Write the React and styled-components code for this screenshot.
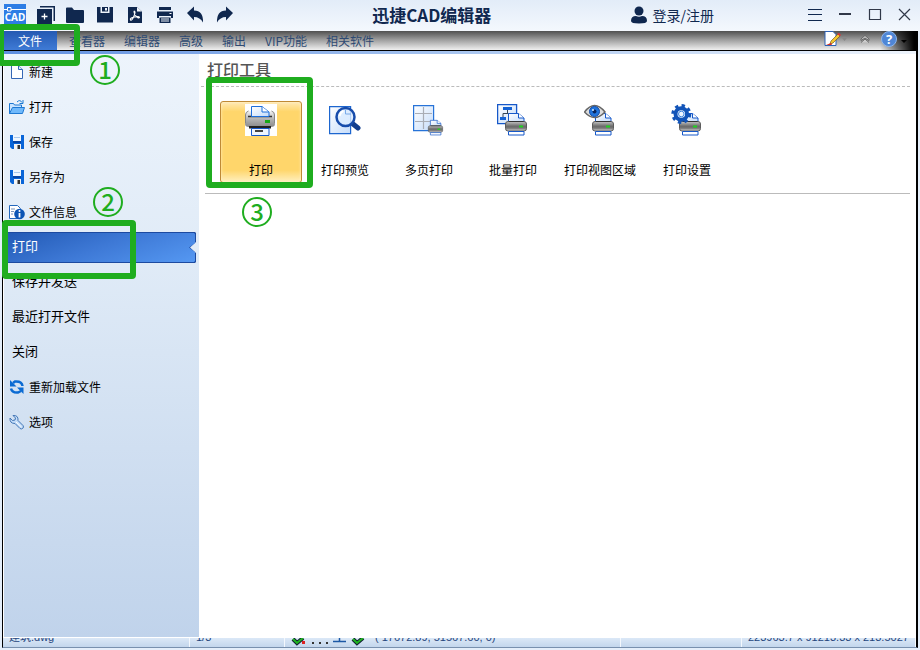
import { useState } from 'react'
import styled, { createGlobalStyle, css } from 'styled-components'

const NAVY = '#10284f'
const MARK = '#1fad1f'

const tabs = ['查看器', '编辑器', '高级', '输出', 'VIP功能', '相关软件']

const Svg = ({ size = 20, children }) => (
    <svg width={size} height={size} viewBox={`0 0 ${size} ${size}`} aria-hidden='true'>{children}</svg>
)

// title bar icons

const quickActions = [
    {
        name: '新建',
        icon: <><path d='M5 1h15v15h-1.5V2.500H5z' fill={NAVY} /><path d='M2 4h15v15H2z' fill={NAVY} /><path d='M9.500 8.500v6M6.500 11.500h6' stroke='#fff' strokeWidth='1.300' /></>
    },
    {
        name: '打开',
        icon: <path d='M1 3.500q0-1 1-1h5l2 2.500h9q1 0 1 1V17q0 1-1 1H2q-1 0-1-1z' fill={NAVY} />
    },
    {
        name: '保存',
        icon: <><path d='M2 2h16v15.500H2z' fill={NAVY} /><path d='M5.500 2h9v6h-9z' fill='#edf3fb' /><path d='M7 2h6v4.500H7z' fill={NAVY} /><path d='M10 3h2v2.500h-2z' fill='#edf3fb' /></>
    },
    {
        name: 'PDF',
        icon: <><path d='M3 2h9l5 4.500V18H3z' fill={NAVY} /><path d='M12 2l5 4.500h-5z' fill='#f3f7fc' /><path d='M9 6q2 0 0 5T5.500 15q-1-2 4-3t5 .5q-1 1.500-3.500-1.500T9 6' fill='none' stroke='#fff' strokeWidth='1.100' /></>
    },
    {
        name: '打印',
        icon: <><path d='M4 2h12v3H4zM2 6.500h16V13h-2v-2H4v2H2zM4.500 12.500h11V18h-11z' fill={NAVY} /><path d='M6 14h8M6 16h8' stroke='#edf3fb' /><path d='M14.500 8.500h2' stroke='#fff' /></>
    },
    {
        name: '撤销',
        icon: <path d='M2 8 9 1.500v4q9.500 0 9 12-3-5.500-9-5.500v3.500z' fill={NAVY} />
    },
    {
        name: '重做',
        icon: <path d='M18 8 11 1.500v4Q1.500 5.500 2 17.500q3-5.500 9-5.500v3.500z' fill={NAVY} />
    },
]

const windowActions = [
    { name: '菜单', icon: <path d='M3 4.500h14M3 9.500h14M3 15.500h14' stroke={NAVY} strokeWidth='1.200' /> },
    { name: '最小化', icon: <path d='M4 9h12' stroke='#303848' strokeWidth='2' /> },
    { name: '最大化', icon: <path d='M4.500 4.500h11v10h-11z' fill='none' stroke='#303848' strokeWidth='1.200' /> },
    { name: '关闭', icon: <path d='M4 4l11 11M15 4 4 15' stroke='#303848' strokeWidth='1.200' /> },
]

// side menu icons

const DiskIcon = () => (
    <Svg size={16}>
        <path d='M1 1h14v14H3l-2-2z' fill='#0965d8' />
        <path d='M4 1h8v6H4z' fill='#eef6ff' />
        <path d='M5 3.500h6' stroke='#a9c8ec' />
        <path d='M4 8h8' stroke='#083d94' strokeWidth='1.500' />
        <path d='M5 10h7v5H5z' fill='#f4f4f4' />
        <path d='M8.500 11H11v4H8.500z' fill='#333' />
    </Svg>
)

const menuItems = [
    {
        label: '新建',
        icon: <Svg size={16}><path d='M2.500 1.500h7l4 4v9h-11z' fill='#fff' stroke='#3567b5' /><path d='M9.500 1.500v4h4' fill='#dce9fa' stroke='#3567b5' /></Svg>
    },
    {
        label: '打开',
        icon: <Svg size={16}><path d='M.5 14.500v-10h4l1 1.500h7v8z' fill='#c9e4ff' stroke='#1e78d2' /><path d='M.5 14.500l3-6h12l-2 6z' fill='#70b9fb' stroke='#1e78d2' /><path d='M8 3q3-3 5 .5M14 1v3.500h-3.500' fill='none' stroke='#1878d2' /></Svg>
    },
    { label: '保存', icon: <DiskIcon /> },
    { label: '另存为', icon: <DiskIcon /> },
    {
        label: '文件信息',
        icon: <Svg size={16}><path d='M.5 1.500h8l3 3v10H.5z' fill='#fff' stroke='#2468bd' /><path d='M2 5h4M2 7.500h3M2 10h2' stroke='#7893b8' /><circle cx='10.500' cy='10' r='5.300' fill='#0c55b5' /><path d='M10.500 9v4.500' stroke='#fff' strokeWidth='1.800' /><circle cx='10.500' cy='7' r='1' fill='#fff' /></Svg>
    },
    { label: '打印' },
    { label: '保存并发送' },
    { label: '最近打开文件' },
    { label: '关闭' },
    {
        label: '重新加载文件',
        icon: <Svg size={16}><path d='M13.500 7Q13 2 6 2.500L4 4' fill='none' stroke='#0b6bd3' strokeWidth='2.500' /><path d='M1 1v6.500h6.500z' fill='#0b6bd3' /><path d='M2 9.500Q3 14 9 13.500L12 12' fill='none' stroke='#0b6bd3' strokeWidth='2.500' /><path d='M14.500 15V8.500H8z' fill='#0b6bd3' /></Svg>
    },
    {
        label: '选项',
        icon: <Svg size={16}><path d='M4 1.500 6.500 4 6 6 3.500 6.500 1 4q-.5 5.500 5 5.500l5 5q1.500 1 2.800-.2t.2-2.800L9 6.500Q9.500 1 4 1.500z' fill='#c3dcf8' stroke='#4477b6' /><path d='M7 8l5.500 5' stroke='#fff' /></Svg>
    },
]

// print tool icons

const Gradients = () => (
    <defs>
        <linearGradient id='shell' x1='0' y1='0' x2='0' y2='1'>
            <stop offset='0' stopColor='#f5f5f5' />
            <stop offset='.5' stopColor='#b4b4b4' />
            <stop offset='1' stopColor='#8a8a8a' />
        </linearGradient>
        <linearGradient id='darkShell' x1='0' y1='0' x2='0' y2='1'>
            <stop offset='0' stopColor='#c4c4c4' />
            <stop offset='.5' stopColor='#6b6b6b' />
            <stop offset='.7' stopColor='#777' />
            <stop offset='1' stopColor='#d8d8d8' />
        </linearGradient>
        <linearGradient id='sheet' x1='0' y1='0' x2='1' y2='1'>
            <stop offset='0' stopColor='#fff' />
            <stop offset='1' stopColor='#c5dcfa' />
        </linearGradient>
    </defs>
)

const SmallPrinter = () => (
    <g>
        <path d='M3.500 9V.5h10L19 5v4z' fill='url(#sheet)' stroke='#1658c9' />
        <path d='M13.500.5V5H19' fill='#fff' stroke='#1658c9' />
        <rect x='.5' y='8.500' width='21' height='9.500' rx='2.500' fill='url(#darkShell)' stroke='#5c5c5c' />
        <path d='M4 8.500h14.500' stroke='#333' />
        <path d='M14 13.500h4' stroke='#20d020' strokeWidth='2' />
        <path d='M3.500 18.500h15.500v3.500H3.500z' fill='#fff' stroke='#1658c9' />
    </g>
)

const tools = [
    {
        label: '打印',
        icon: <Svg size={32}>
            <Gradients />
            <path d='M0 0h32v32H0z' fill='#fff' />
            <path d='M3 7h25q2 1 2 4v9q0 3-4 3H4q-4 0-4-3v-9q0-3 3-4z' fill='url(#shell)' />
            <path d='M.5 19V11q0-3 3-4M29.500 19V11q0-3-3-4' fill='none' stroke='#888' />
            <path d='M3 12.500h24' stroke='#333' strokeWidth='1.500' />
            <path d='M6.500 12.500v-10H17L24 8v4.500z' fill='url(#sheet)' stroke='#1d6edb' />
            <path d='M17 2.500V8h6.500' fill='#fff' stroke='#1d6edb' />
            <path d='M20 16h5v3h-5z' fill='#18a818' />
            <path d='M4 22h22v2.500H4z' fill='#222' />
            <path d='M6.500 24.500H24v7H6.500z' fill='#eef5ff' stroke='#1658c9' />
            <path d='M10 27h8' stroke='#444' strokeWidth='2' />
        </Svg>
    },
    {
        label: '打印预览',
        icon: <Svg size={32}>
            <Gradients />
            <path d='M.6 2.600h21v27H.6z' fill='url(#sheet)' stroke='#1d66cf' strokeWidth='1.200' />
            <path d='M24 20l5 4' stroke='#113d8d' strokeWidth='5' strokeLinecap='round' />
            <circle cx='16.500' cy='13' r='9' fill='#dcecff' fillOpacity='.8' stroke='#174cab' strokeWidth='2.500' />
            <path d='M16.500 5.500V10h5.500' fill='none' stroke='#7aaae8' />
            <path d='M10.500 12q1-4 4-5' fill='none' stroke='#fff' strokeWidth='2' />
        </Svg>
    },
    {
        label: '多页打印',
        icon: <Svg size={32}>
            <Gradients />
            <path d='M.6 1.600h20v25H.6z' fill='url(#sheet)' stroke='#2773d8' strokeWidth='1.200' />
            <path d='M10.500 3v22M2 9.500h17M2 17.500h17' stroke='#a9adb5' strokeWidth='1.200' />
            <g transform='translate(15 16) scale(.68)'><SmallPrinter /></g>
        </Svg>
    },
    {
        label: '批量打印',
        icon: <Svg size={32}>
            <Gradients />
            <path d='M.6.6h19v19H.6z' fill='url(#sheet)' stroke='#1658c9' strokeWidth='1.300' />
            <path d='M6 3h9v3H6zM3 13h6v3H3z' fill='#1261d5' />
            <path d='M10.500 6v3M6 13V9.500h8' fill='none' stroke='#345' />
            <g transform='translate(8 9)'><SmallPrinter /></g>
        </Svg>
    },
    {
        label: '打印视图区域',
        icon: <Svg size={32}>
            <Gradients />
            <g transform='translate(8 9)'><SmallPrinter /></g>
            <path d='M.5 8Q10.500-5 21 8 10.500 19 .5 8z' fill='#ddd' stroke='#666' strokeWidth='1.500' />
            <circle cx='10.500' cy='7.500' r='5' fill='#1f73dc' stroke='#134da8' />
            <circle cx='10.500' cy='7.500' r='2' fill='#07245c' />
            <circle cx='9' cy='6' r='1' fill='#d6eaff' />
        </Svg>
    },
    {
        label: '打印设置',
        icon: <Svg size={32}>
            <Gradients />
            <g transform='translate(8 9)'><SmallPrinter /></g>
            <circle cx='10.300' cy='10' r='8.500' fill='none' stroke='#1254b8' strokeWidth='3' strokeDasharray='3.340 3.340' />
            <circle cx='10.300' cy='10' r='5.800' fill='#fff' stroke='#1254b8' strokeWidth='4' />
            <circle cx='10.300' cy='10' r='2.800' fill='#eff6ff' stroke='#3a83df' />
        </Svg>
    },
]

const App = () => {

    const [active, setActive] = useState('打印')
    const [tool, setTool] = useState('打印')

    return (
        <Page>
            <GlobalStyle />
            <TitleBar>
                <Logo>
                    <svg width='22' height='21' viewBox='0 0 22 21' aria-hidden='true'>
                        <path d='M0 0h22v21H0z' fill='#2d7de5' />
                        <path d='M0 5.500h3M7 5.500h15M3.500 3.500h3.500v3.500H3.500z' fill='none' stroke='#fff' />
                        <text x='11' y='17' fill='#fff' fontSize='10' fontWeight='700' fontFamily='Noto Sans' textAnchor='middle'>CAD</text>
                    </svg>
                </Logo>
                {quickActions.map(({ name, icon }) => (
                    <IconButton key={name} aria-label={name}><Svg>{icon}</Svg></IconButton>
                ))}
                <Title>迅捷CAD编辑器</Title>
                <LoginButton>
                    <svg width='16' height='18' viewBox='0 0 16 18' aria-hidden='true'>
                        <circle cx='8' cy='5' r='4.500' fill={NAVY} />
                        <path d='M0 15q0-5 5-5 3 1.500 6 0 5 0 5 5 0 2.500-8 2.500T0 15z' fill={NAVY} />
                    </svg>
                    登录/注册
                </LoginButton>
                {windowActions.map(({ name, icon }) => (
                    <IconButton key={name} aria-label={name}><Svg>{icon}</Svg></IconButton>
                ))}
            </TitleBar>

            <Frame>
                <Ribbon>
                    <FileTab>文件</FileTab>
                    <Tabs>
                        {tabs.map(tab => <Tab key={tab}>{tab}</Tab>)}
                    </Tabs>
                    <RibbonTools>
                        <RibbonButton aria-label='样式' $width={28}>
                            <svg width='23' height='16' viewBox='0 0 23 16' aria-hidden='true'>
                                <path d='M1 .5h8l3 3v11H1z' fill='#fff' stroke='#2d61b4' />
                                <path d='M6 13l1-3 7-7 2 2-7 7z' fill='#f5c52d' stroke='#755b22' strokeWidth='.7' />
                                <path d='M13 3l2-1 2 2-1 1z' fill='#d33' />
                                <path d='M2 14l5-2 1 2z' fill='#d92f20' />
                                <path d='M18 7h5l-2.500 3z' fill='#888' />
                            </svg>
                        </RibbonButton>
                        <RibbonButton aria-label='收起' $width={32}>
                            <svg width='10' height='10' viewBox='0 0 10 10' aria-hidden='true'>
                                <path d='M1 5l4-3.500L9 5v1.500L5 4 1 6.500zM1 8.500 5 5l4 3.500' fill='#ccc' stroke='#555' strokeWidth='.8' />
                            </svg>
                        </RibbonButton>
                        <RibbonButton aria-label='帮助' $width={28}>
                            <svg width='28' height='16' viewBox='0 0 28 16' aria-hidden='true'>
                                <circle cx='8' cy='8' r='7.500' fill='#4f86d6' stroke='#8db5ec' />
                                <text x='8' y='13' fill='#fff' fontSize='13' fontWeight='700' fontFamily='Noto Sans' textAnchor='middle'>?</text>
                                <path d='M20 9h6l-3 3z' fill='#000' />
                            </svg>
                        </RibbonButton>
                    </RibbonTools>
                </Ribbon>
                <AccentLine />

                <Body>
                    <SideMenu>
                        {menuItems.map(({ label, icon }) => (
                            <MenuItem key={label} $plain={!icon} $active={label === active} onClick={() => setActive(label)}>
                                {icon}
                                <span>{label}</span>
                            </MenuItem>
                        ))}
                    </SideMenu>
                    <Content>
                        <Heading>打印工具</Heading>
                        <ToolList>
                            {tools.map(({ label, icon }) => (
                                <ToolButton key={label} $active={label === tool} onClick={() => setTool(label)}>
                                    {icon}
                                    <span>{label}</span>
                                </ToolButton>
                            ))}
                        </ToolList>
                    </Content>
                </Body>

                <StatusBar>
                    <StatusCell $width={187}>建筑.dwg</StatusCell>
                    <StatusCell $width={95}>1/3</StatusCell>
                    <StatusIcons>
                        <svg width='78' height='10' viewBox='0 0 78 10' aria-hidden='true'>
                            <path d='M2 1l4 4 6-5M62 1l4 4 6-5' fill='none' stroke='#123' strokeWidth='4' />
                            <path d='M2 1l4 4 6-5M62 1l4 4 6-5' fill='none' stroke='#20b520' strokeWidth='2' />
                            <path d='M11 3h3v3h-3z' fill='#d22' />
                            <path d='M21 4h2v2h-2zM28 4h2v2h-2zM35 4h2v2h-2z' fill='#333' />
                            <path d='M42 3.500h13M48.500 0v3' stroke='#1c58a5' strokeWidth='1.500' />
                        </svg>
                    </StatusIcons>
                    <StatusCell $grow>( 17672.89, 51567.60, 0)</StatusCell>
                    <StatusCell $width={121} />
                    <StatusCell $width={174}>223963.7 x 91213.33 x 213.5027</StatusCell>
                </StatusBar>
            </Frame>

            {/* step marks drawn over the window */}

            <Outline $x={-2} $y={24} $w={82} $h={42} />
            <Outline $x={2} $y={220} $w={134} $h={59} />
            <Outline $x={206} $y={77} $w={107} $h={111} />
            <Step $x={90} $y={55}>1</Step>
            <Step $x={93} $y={187}>2</Step>
            <Step $x={242} $y={197}>3</Step>
        </Page>
    )
}

const GlobalStyle = createGlobalStyle`
    * {
        box-sizing: border-box;
    }

    body {
        margin: 0;
        font-family: 'Noto Sans CJK SC', sans-serif;
        font-size: 12px;
        overflow: hidden;
    }

    button {
        font: inherit;
        color: inherit;
        background: none;
        border: none;
        padding: 0;
        cursor: pointer;
    }

    svg {
        display: block;
        flex: none;
    }
`

const Page = styled.div`
    position: relative;
    display: flex;
    flex-direction: column;
    height: 100vh;
    padding-bottom: 2px;
    background-color: #e4eefa;
    overflow: hidden;
`

const TitleBar = styled.header`
    display: flex;
    align-items: center;
    height: 31px;
    padding-bottom: 2px;
    flex: none;
    background: linear-gradient(#e2ecf8, #f4f8fd);
    color: ${NAVY};
`

const Logo = styled.div`
    width: 30px;
    display: flex;
    justify-content: center;
`

const IconButton = styled.button`
    width: 30px;
    height: 28px;
    display: flex;
    align-items: center;
    justify-content: center;
`

const Title = styled.h1`
    flex: 1;
    margin: 0;
    font-size: 17px;
    line-height: 28px;
    font-weight: 700;
    text-align: center;
`

const LoginButton = styled.button`
    display: flex;
    align-items: center;
    gap: 6px;
    margin: 0 86px 0 7px;
    font-size: 14px !important;
`

const Frame = styled.div`
    flex: 1;
    min-height: 0;
    display: flex;
    flex-direction: column;
    margin: 0 2px;
    border-left: 1px solid #000;
    border-right: 2px solid #000;
    border-bottom: 1px solid #7890ae;
`

const Ribbon = styled.nav`
    display: flex;
    height: 20px;
    flex: none;
    border-bottom: 1px solid #000;
    background: linear-gradient(to right, transparent calc(100% - 36px), #000 calc(100% - 2px)), linear-gradient(#505050, #9c9c9c 45%, #f0f0f0);
    color: #2f4a72;
`

const FileTab = styled.button`
    width: 54px;
    margin-right: 12px !important;
    background: linear-gradient(#2459b2, #3f7bd6) !important;
    color: #fff !important;
    line-height: 18px !important;
`

const Tabs = styled.div`
    display: flex;
    gap: 19px;
    flex: 1;
`

const Tab = styled.button`
    line-height: 18px !important;
`

const RibbonTools = styled.div`
    display: flex;
    align-items: center;
    padding: 0 7px 3px 0;
`

const RibbonButton = styled.button`
    width: ${props => props.$width}px;
    display: flex;
    justify-content: center;
`

const AccentLine = styled.div`
    height: 3px;
    flex: none;
    background: linear-gradient(to right, #5f8fe0, #a9c6f0 50%, #eef4fc);
`

const Body = styled.div`
    flex: 1;
    min-height: 0;
    display: flex;
    background-color: #fff;
`

const SideMenu = styled.aside`
    width: 196px;
    flex: none;
    display: flex;
    flex-direction: column;
    border-left: 1px solid #fff;
    border-bottom: 1px solid #fff;
    background: linear-gradient(#edf4fc, #e0ebf7 35%, #c0d3eb);
`

const activeItem = css`
    color: #fff;

    /* the notched bar behind the text */
    &::before,
    &::after {
        content: '';
        position: absolute;
        z-index: -1;
        inset: 3px 3px 1px 0;
        background: #1c4aa0;
        clip-path: polygon(0 0, calc(100% - 1px) 0, 100% 1px, 100% 10px, calc(100% - 6px) 50%, 100% calc(100% - 10px), 100% calc(100% - 1px), calc(100% - 1px) 100%, 0 100%);
    }

    &::after {
        inset: 4px 4px 2px 1px;
        background: linear-gradient(160deg, #2259b4, #3e79d6 50%, #5598f2);
    }
`

const MenuItem = styled.button`
    position: relative;
    z-index: 0;
    display: flex;
    align-items: center;
    gap: 4px;
    height: 35px;
    flex: none;
    padding: ${props => props.$plain ? '0 0 2px 8px' : '0 0 0 5px'} !important;
    font-size: ${props => props.$plain ? 13 : 12}px !important;
    line-height: 20px !important;
    color: #000;
    text-align: left;
    ${props => props.$active && activeItem}
`

const Content = styled.main`
    flex: 1;
    min-width: 0;
    padding: 0 6px 0 2px;
`

const Heading = styled.h2`
    margin: 0;
    padding: 0 0 2px 6px;
    border-bottom: 1px dashed #bbb;
    font-size: 16px;
    font-weight: 500;
    line-height: 30px;
    color: #555;
`

const ToolList = styled.div`
    display: flex;
    gap: 2px;
    margin-left: 4px;
    padding: 14px 0 10px 15px;
    border-bottom: 1px solid #bbb;
`

const ToolButton = styled.button`
    display: flex;
    flex-direction: column;
    align-items: center;
    gap: 26px;
    min-width: 82px;
    height: 82px;
    padding: 2px 7px !important;
    border: 1px solid transparent !important;
    border-radius: 3px;
    line-height: 16px !important;
    color: #000;
    white-space: nowrap;

    ${props => props.$active && css`
        border-color: #c08a35 !important;
        background: linear-gradient(#ffe9b5, #ffd66b 12%, #ffd66b 85%, #fff0c0) !important;
        box-shadow: inset 0 0 3px #fff0c8;
    `}
`

const StatusBar = styled.footer`
    display: flex;
    align-items: flex-end;
    height: 9px;
    flex: none;
    background: linear-gradient(#dbe8f7, #c3d6ec);
    color: #24447c;
    overflow: hidden;
`

const StatusCell = styled.div`
    ${props => props.$grow ? 'flex: 1;' : `width: ${props.$width}px;`}
    height: 20px;
    padding-left: 6px;
    border-right: 1px solid #f4f8fd;
    font-family: 'Liberation Sans', 'Noto Sans CJK SC', sans-serif;
    font-size: 11px;
    line-height: 20px;
    white-space: nowrap;
`

const StatusIcons = styled.div`
    height: 9px;
    padding-left: 6px;
`

const Outline = styled.div`
    position: absolute;
    left: ${props => props.$x}px;
    top: ${props => props.$y}px;
    width: ${props => props.$w}px;
    height: ${props => props.$h}px;
    border: 6px solid ${MARK};
    border-radius: 4px;
    pointer-events: none;
`

const Step = styled.div`
    position: absolute;
    left: ${props => props.$x}px;
    top: ${props => props.$y}px;
    width: 30px;
    height: 30px;
    border: 2px solid ${MARK};
    border-radius: 50%;
    color: ${MARK};
    font-size: 24px;
    font-weight: 500;
    line-height: 23px;
    text-align: center;
    pointer-events: none;
`

export default App
